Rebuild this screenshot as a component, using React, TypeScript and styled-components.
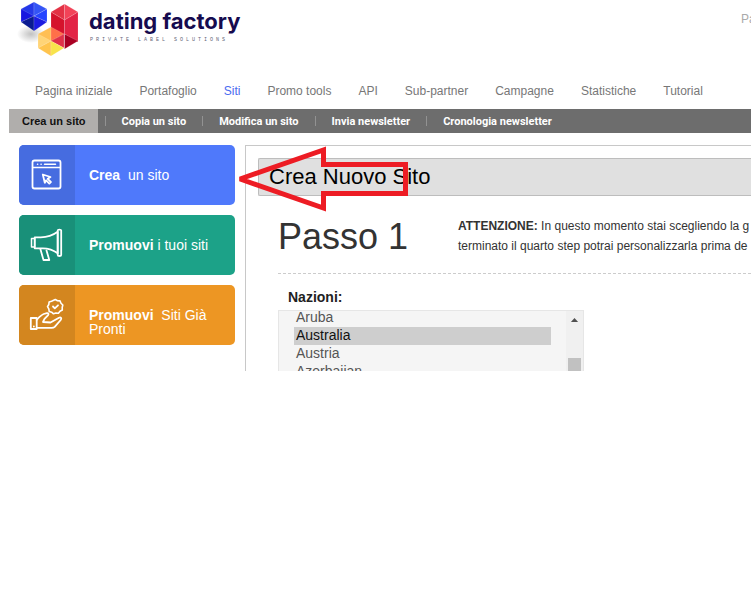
import React, { useLayoutEffect, useRef } from "react";
import styled, { createGlobalStyle } from "styled-components";

const GlobalStyle = createGlobalStyle`
  * { box-sizing: border-box; }
  body {
    margin: 0;
    background: #fff;
    color: #333;
    font-family: "Liberation Sans", Arial, sans-serif;
    overflow-x: hidden;
  }
`;

const Page = styled.div`
  position: relative;
  overflow: hidden;
`;

const Header = styled.header`
  display: flex;
  align-items: flex-start;
  justify-content: space-between;
  height: 78px;
  padding-left: 15px;
`;

const Brand = styled.a`
  display: flex;
  text-decoration: none;
  color: #160b4f;
`;

const BrandText = styled.span`
  display: flex;
  flex-direction: column;
  padding: 8px 0 0 4px;
`;

const BrandName = styled.span`
  font: 700 22px/26px Inter, sans-serif;
  white-space: nowrap;
`;

const BrandTag = styled.span`
  padding: 3px 0 0 1px;
  font: 400 5px/6px "Liberation Mono", monospace;
  letter-spacing: 3px;
  color: #66667a;
  white-space: nowrap;
`;

const HeaderLink = styled.a`
  flex: none;
  width: 10px;
  padding-top: 12px;
  font-size: 12px;
  line-height: 14px;
  color: #aaa;
  text-decoration: none;
`;

const MainNav = styled.nav`
  display: flex;
  gap: 27px;
  height: 31px;
  padding: 5px 0 0 35px;
`;

const MainLink = styled.a<{ $active?: boolean }>`
  font-size: 12px;
  line-height: 16px;
  white-space: nowrap;
  text-decoration: none;
  color: ${(p) => (p.$active ? "#4a6cf0" : "#777")};
`;

const SubNav = styled.nav`
  display: flex;
  align-items: stretch;
  height: 24px;
  margin-left: 9px;
  background: #6d6d6d;
`;

const SubLink = styled.a<{ $active?: boolean }>`
  display: flex;
  align-items: center;
  padding: ${(p) => (p.$active ? "0 12px 0 13px" : "0 16px")};
  margin-right: ${(p) => (p.$active ? "7px" : "0")};
  background: ${(p) => (p.$active ? "#b0aeac" : "transparent")};
  color: ${(p) => (p.$active ? "#111" : "#fff")};
  font-family: ${(p) => (p.$active ? '"Liberation Sans", Arial' : "Roboto")}, sans-serif;
  font-size: 11px;
  font-weight: 700;
  white-space: nowrap;
  text-decoration: none;
`;

const Separator = styled.span`
  align-self: center;
  width: 1px;
  height: 10px;
  background: #929292;
`;

const Body = styled.div`
  display: flex;
  gap: 10px;
  padding: 12px 0 0 19px;
`;

const Sidebar = styled.aside`
  display: flex;
  flex: none;
  flex-direction: column;
  gap: 10px;
  width: 216px;
`;

const ActionButton = styled.button<{ $color: string; $dark: string }>`
  display: flex;
  align-items: stretch;
  height: 60px;
  padding: 0;
  border: 0;
  border-radius: 5px;
  overflow: hidden;
  background: ${(p) => p.$color};
  color: #fff;
  font: 400 14px/14px "Liberation Sans", Arial, sans-serif;
  text-align: left;

  > span:first-child {
    display: flex;
    flex: none;
    align-items: center;
    justify-content: center;
    width: 56px;
    background: ${(p) => p.$dark};
  }
`;

const ActionLabel = styled.span<{ $low?: boolean }>`
  align-self: center;
  padding: ${(p) => (p.$low ? "14px" : "0")} 14px 0;
  white-space: pre-wrap;
`;

const Panel = styled.main`
  flex: 1;
  min-width: 0;
  padding: 12px 0 0 12px;
  border: solid #c8c8c8;
  border-width: 1px 0 0 1px;
`;

const PanelTitle = styled.h1`
  height: 38px;
  margin: 0;
  padding-left: 10px;
  border: 1px solid #bdbdbd;
  border-right: 0;
  border-radius: 2px 0 0 2px;
  background: #e0e0e0;
  color: #000;
  font-size: 22px;
  font-weight: 400;
  line-height: 36px;
  white-space: nowrap;
`;

const Step = styled.section`
  display: flex;
  margin-left: 20px;
  height: 78px;
  padding-top: 20px;
  border-bottom: 1px dashed #ccc;
`;

const StepTitle = styled.h2`
  flex: none;
  width: 180px;
  margin: 0;
  font-size: 36px;
  font-weight: 400;
  line-height: 42px;
`;

const Notice = styled.p`
  margin: 0;
  font-size: 12px;
  line-height: 20px;
  white-space: nowrap;
`;

const Field = styled.div`
  margin-left: 20px;
  padding-top: 15px;
`;

const FieldLabel = styled.label`
  display: block;
  padding-left: 10px;
  font-size: 14px;
  font-weight: 700;
  line-height: 16px;
  color: #222;
`;

const ListFrame = styled.div`
  display: flex;
  width: 306px;
  height: 61px;
  margin-top: 5px;
  border: 1px solid #e6e6e6;
  border-bottom: 0;
  background: #f5f5f5;
  overflow: hidden;
`;

const CountryList = styled.select`
  flex: 1;
  height: 60px;
  padding: 0 15px;
  border: 0;
  border-radius: 0;
  outline: 0;
  background: transparent;
  color: #555;
  font: 400 14px/18px "Liberation Sans", Arial, sans-serif;
  scrollbar-width: none;

  option {
    min-height: 18px;
    height: 18px;
    padding: 0 2px;
  }
  option:checked {
    background: #cecece linear-gradient(#cecece, #cecece);
    color: #111;
  }
`;

const ScrollTrack = styled.div`
  display: flex;
  flex: none;
  flex-direction: column;
  align-items: center;
  gap: 36px;
  width: 17px;
  padding-top: 7px;
  background: #f0f0f0;
`;

const ScrollThumb = styled.div`
  width: 13px;
  height: 16px;
  background: #c1c1c1;
`;

const Arrow = styled.svg`
  position: absolute;
  left: 235px;
  top: 140px;
  pointer-events: none;
`;

const Logo = () => (
  <svg width="70" height="60" viewBox="0 0 70 60" aria-hidden="true">
    <defs>
      <radialGradient id="shade">
        <stop offset="0" stopColor="#999" stopOpacity="0.6" />
        <stop offset="1" stopColor="#999" stopOpacity="0" />
      </radialGradient>
    </defs>
    <ellipse cx="16" cy="34" rx="14" ry="9" fill="url(#shade)" />
    <g stroke="#fff" strokeOpacity="0.3" strokeWidth="0.5">
      <path d="M19 2 6 9v13l13-6z" fill="#2438e8" />
      <path d="M19 2l13 7-13 7z" fill="#3454f5" />
      <path d="M6 9l13 7-13 6z" fill="#1717e0" />
      <path d="M32 9v13l-13-6z" fill="#2444ff" />
      <path d="M6 22l13-6v15z" fill="#0a1b91" />
      <path d="M19 16l13 6-13 9z" fill="#1c1ce0" />
      <path d="M49.500 4 36 12l13.500 8z" fill="#e33245" />
      <path d="M49.500 4 63 12l-13.500 8z" fill="#f24358" />
      <path d="M36 12l13.500 8v14L36 42z" fill="#d5132c" />
      <path d="M63 12l-13.500 8v14L63 42z" fill="#e22345" />
      <path d="M49.500 34 63 41l-13.500 8z" fill="#a90023" />
      <path d="M36 27 23 34v14l13-7z" fill="#ffbf54" />
      <path d="M23 34l13 7-13 7z" fill="#ffd477" />
      <path d="M36 27l13 7-13 7z" fill="#ff7049" />
      <path d="M49 34v14l-13-7z" fill="#df3149" />
      <path d="M23 48l13-7v15z" fill="#ffc44e" />
      <path d="M36 41l13 7-13 8z" fill="#f8e34b" />
    </g>
  </svg>
);

const iconProps = {
  fill: "none",
  stroke: "#fff",
  strokeWidth: 1.8,
  strokeLinejoin: "round" as const,
  strokeLinecap: "round" as const,
  width: 56,
  height: 60,
  viewBox: "0 0 56 60",
  "aria-hidden": true,
};

const BrowserIcon = () => (
  <svg {...iconProps}>
    <rect x="13.500" y="15.500" width="28" height="28" rx="2" />
    <path d="M14 22.500h27M18.500 19.300h.2M22 19.300h.2M25.500 19.300h11" strokeWidth="1.5" />
    <path d="M23.800 29.500l7.700 2.500-2.800 1.800 3.200 3.200-1.600 1.600-3.200-3.300-1.300 2.500z" />
  </svg>
);

const MegaphoneIcon = () => (
  <svg {...iconProps}>
    <path d="M12.500 23.500h3.200v8.500h-3.200z" strokeWidth="1.5" />
    <path d="M15.700 22.300h6c6.500 0 12-1.800 17-5.500v21.500c-4.500-3.500-9.500-5-15-5h-8z" />
    <path d="M38.700 16v-.5c0-1.300 3.500-1.300 3.500 0v24.500c0 1.300-3.500 1.300-3.500 0z" />
    <path d="M21.300 33.800l3.200 11.200h5.800L27.500 35.500" />
  </svg>
);

const HandIcon = () => (
  <svg {...iconProps}>
    <path d="M11.800 33h5.900v11h-5.900zM14.800 41.500h.1" />
    <path d="M17.700 34.800c2.500-2.500 4.500-4.800 7-5.800l3.200-.8c1.700-.2 2 1 1 2.200l-3.400 3.500-1.500 3.100 7.500.5 8.500-4.800c1.800-.8 3 .6 1.700 2.300l-6 6.800c-1 .9-1.700 1-3 1h-15" />
    <path d="M36.300 14.500l2.200 1.300 2.500.1 1 2.300 1.800 1.800-.6 2.500.1 2.500-2.300 1.200-1.600 2-2.500-.2-2.400.8-1.900-1.600-2.400-.8-.4-2.500-1.300-2.200 1.300-2.200.3-2.500 2.400-.8z" strokeWidth="1.600" />
    <path d="M34 21.500l1.800 1.800 3.200-3" />
  </svg>
);

const mainLinks = [
  "Pagina iniziale", "Portafoglio", "Siti", "Promo tools", "API",
  "Sub-partner", "Campagne", "Statistiche", "Tutorial",
];

const subLinks = ["Copia un sito", "Modifica un sito", "Invia newsletter", "Cronologia newsletter"];

const countries = ["Argentina", "Armenia", "Aruba", "Australia", "Austria", "Azerbaijan", "Bahamas", "Bahrain"];

export default function App() {
  const listRef = useRef<HTMLSelectElement>(null);

  useLayoutEffect(() => {
    const list = listRef.current;
    if (list) list.scrollTop = 38;
  }, []);

  return (
    <Page>
      <GlobalStyle />
      <Header>
        <Brand href="#">
          <Logo />
          <BrandText>
            <BrandName>dating factory</BrandName>
            <BrandTag>PRIVATE LABEL SOLUTIONS</BrandTag>
          </BrandText>
        </Brand>
        <HeaderLink href="#">Pa</HeaderLink>
      </Header>
      <MainNav>
        {mainLinks.map((text) => (
          <MainLink key={text} href="#" $active={text === "Siti"}>{text}</MainLink>
        ))}
      </MainNav>
      <SubNav>
        <SubLink href="#" $active>Crea un sito</SubLink>
        {subLinks.map((text) => (
          <React.Fragment key={text}>
            <Separator />
            <SubLink href="#">{text}</SubLink>
          </React.Fragment>
        ))}
      </SubNav>
      <Body>
        <Sidebar>
          <ActionButton $color="#4f79fb" $dark="#466ce0">
            <span><BrowserIcon /></span>
            <ActionLabel><b>Crea</b>{"  un sito"}</ActionLabel>
          </ActionButton>
          <ActionButton $color="#1ca288" $dark="#199079">
            <span><MegaphoneIcon /></span>
            <ActionLabel><b>Promuovi</b> i tuoi siti</ActionLabel>
          </ActionButton>
          <ActionButton $color="#ed9623" $dark="#d3861f">
            <span><HandIcon /></span>
            <ActionLabel $low><b>Promuovi</b>{"  Siti Già Pronti"}</ActionLabel>
          </ActionButton>
        </Sidebar>
        <Panel>
          <PanelTitle>Crea Nuovo Sito</PanelTitle>
          <Step>
            <StepTitle>Passo 1</StepTitle>
            <Notice>
              <b>ATTENZIONE:</b> In questo momento stai scegliendo la g<br />
              terminato il quarto step potrai personalizzarla prima de
            </Notice>
          </Step>
          <Field>
            <FieldLabel htmlFor="countries">Nazioni:</FieldLabel>
            <ListFrame>
              <CountryList id="countries" ref={listRef} size={4} defaultValue="Australia">
                {countries.map((name) => <option key={name}>{name}</option>)}
              </CountryList>
              <ScrollTrack>
                <svg width="9" height="5" viewBox="0 0 9 5" aria-hidden="true">
                  <path d="M4.500 0 9 5H0z" fill="#505050" />
                </svg>
                <ScrollThumb />
              </ScrollTrack>
            </ListFrame>
          </Field>
        </Panel>
      </Body>
      <Arrow width="180" height="76" viewBox="0 0 180 76" aria-hidden="true">
        <path
          d="M5 39 88.500 10v14.500H170.500v29H88.500V68z"
          fill="none"
          stroke="#ed1c24"
          strokeWidth="5"
          strokeMiterlimit="2"
        />
      </Arrow>
    </Page>
  );
}
